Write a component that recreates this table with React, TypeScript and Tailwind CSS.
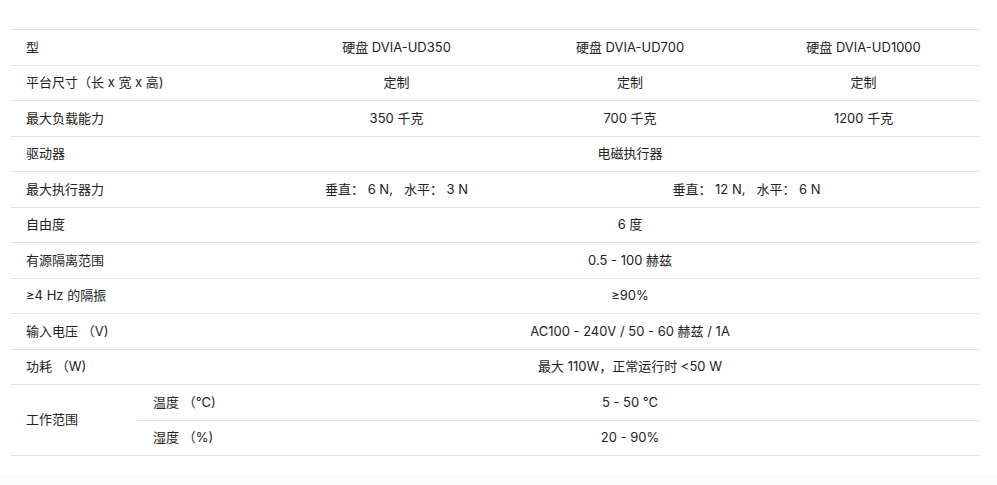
import React from 'react';

const rows: { label: string; values: { text: string; span: number }[] }[] = [
  {
    label: '型',
    values: [
      { text: '硬盘 DVIA-UD350', span: 1 },
      { text: '硬盘 DVIA-UD700', span: 1 },
      { text: '硬盘 DVIA-UD1000', span: 1 },
    ],
  },
  {
    label: '平台尺寸（长 x 宽 x 高)',
    values: [
      { text: '定制', span: 1 },
      { text: '定制', span: 1 },
      { text: '定制', span: 1 },
    ],
  },
  {
    label: '最大负载能力',
    values: [
      { text: '350 千克', span: 1 },
      { text: '700 千克', span: 1 },
      { text: '1200 千克', span: 1 },
    ],
  },
  { label: '驱动器', values: [{ text: '电磁执行器', span: 3 }] },
  {
    label: '最大执行器力',
    values: [
      { text: '垂直： 6 N,   水平： 3 N', span: 1 },
      { text: '垂直： 12 N,   水平： 6 N', span: 2 },
    ],
  },
  { label: '自由度', values: [{ text: '6 度', span: 3 }] },
  { label: '有源隔离范围', values: [{ text: '0.5 - 100 赫兹', span: 3 }] },
  { label: '≥4 Hz 的隔振', values: [{ text: '≥90%', span: 3 }] },
  { label: '输入电压 （V)', values: [{ text: 'AC100 - 240V / 50 - 60 赫兹 / 1A', span: 3 }] },
  { label: '功耗 （W)', values: [{ text: '最大 110W，正常运行时 <50 W', span: 3 }] },
];

export default function App() {
  return (
    <div className="w-[997px] h-[485px] bg-white overflow-hidden text-[13px] text-[#222] font-['Inter','Noto_Sans_CJK_SC',sans-serif]">
      <div className="px-[11px] pt-[29px]">
        <table className="w-[969px] table-fixed border-collapse border-t border-[#e2e2e2]">
          <colgroup>
            <col className="w-[126px]" />
            <col className="w-[143px]" />
            <col className="w-[233px]" />
            <col className="w-[234px]" />
            <col className="w-[233px]" />
          </colgroup>
          <tbody>
            {rows.map((r) => (
              <tr key={r.label} className="h-[35.5px] border-b border-[#e2e2e2]">
                <td colSpan={2} className="pl-[15px] whitespace-pre">
                  {r.label}
                </td>
                {r.values.map((v, i) => (
                  <td key={i} colSpan={v.span} className="text-center whitespace-pre">
                    {v.text}
                  </td>
                ))}
              </tr>
            ))}
            <tr className="h-[35.5px]">
              <td rowSpan={2} className="pl-[15px] border-b border-[#e2e2e2]">
                工作范围
              </td>
              <td className="pl-4 border-b border-[#e2e2e2] whitespace-pre">温度 （°C)</td>
              <td colSpan={3} className="text-center border-b border-[#e2e2e2]">
                5 - 50 °C
              </td>
            </tr>
            <tr className="h-[35.5px] border-b border-[#e2e2e2]">
              <td className="pl-4 whitespace-pre">湿度 （%)</td>
              <td colSpan={3} className="text-center">
                20 - 90%
              </td>
            </tr>
          </tbody>
        </table>
      </div>
      <div className="mt-[18px] h-[20px] bg-[#fbfbfb]" />
    </div>
  );
}
